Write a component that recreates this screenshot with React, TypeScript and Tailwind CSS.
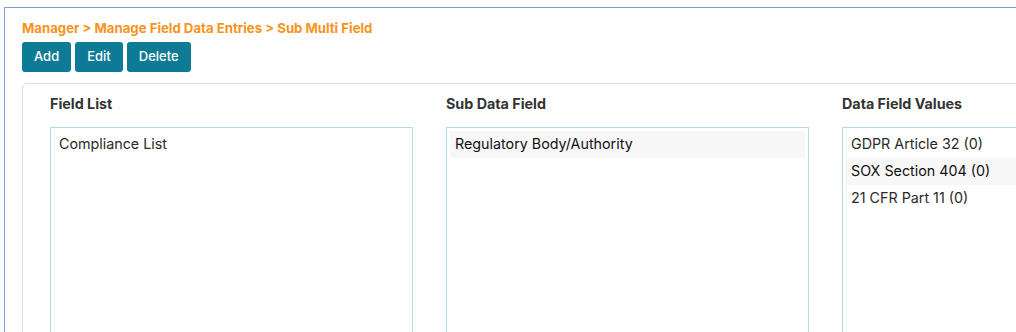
import React, { useState } from 'react';

const columns = [
  { title: 'Field List', items: ['Compliance List'], selected: -1 },
  { title: 'Sub Data Field', items: ['Regulatory Body/Authority'], selected: 0 },
  { title: 'Data Field Values', items: ['GDPR Article 32 (0)', 'SOX Section 404 (0)', '21 CFR Part 11 (0)'], selected: 1 },
];

const ListBox: React.FC<{ items: string[]; selected: number; onSelect: (i: number) => void }> = ({ items, selected, onSelect }) => (
  <div className="h-[260px] w-[363px] border border-[#b5dcea] bg-white p-[3px]">
    {items.map((it, i) => (
      <div
        key={it}
        onClick={() => onSelect(i)}
        className={`h-[27px] px-[5px] pb-[1px] flex items-center text-[14.3px] cursor-pointer ${i === selected ? 'bg-[#f7f7f7] text-[#111]' : 'text-[#2a2a2a]'}`}
      >
        {it}
      </div>
    ))}
  </div>
);

export default function App() {
  const [sel, setSel] = useState(columns.map(c => c.selected));

  return (
    <div className="w-[1016px] h-[332px] overflow-hidden bg-white pt-[7px] pl-[4px]" style={{ fontFamily: 'Inter, "Noto Sans", sans-serif' }}>
      <div className="w-[1100px] h-[400px] border-l border-t border-[#7f9ecf] pl-[17px] pt-[10px]">
        <div className="text-[13.2px] leading-[20px] font-bold text-[#f7941d]">
          Manager &gt; Manage Field Data Entries &gt; Sub Multi Field
        </div>
        <div className="flex gap-[4px] mt-[4px]">
          {['Add', 'Edit', 'Delete'].map(b => (
            <button key={b} className="h-[30px] px-[12px] rounded-[3px] bg-[#0d7b95] text-white text-[13px] font-medium">
              {b}
            </button>
          ))}
        </div>
        <div className="mt-[11px] border border-[#dcdcdc] rounded-[5px] pl-[27px] pt-[10px] h-[300px]">
          <div className="flex gap-[33px]">
            {columns.map((c, ci) => (
              <div key={c.title} className="w-[363px] shrink-0">
                <h3 className="text-[14.3px] leading-[20px] font-bold text-[#333]">{c.title}</h3>
                <div className="mt-[13px]">
                  <ListBox
                    items={c.items}
                    selected={sel[ci]}
                    onSelect={i => setSel(prev => prev.map((v, k) => (k === ci ? i : v)))}
                  />
                </div>
              </div>
            ))}
          </div>
        </div>
      </div>
    </div>
  );
}
